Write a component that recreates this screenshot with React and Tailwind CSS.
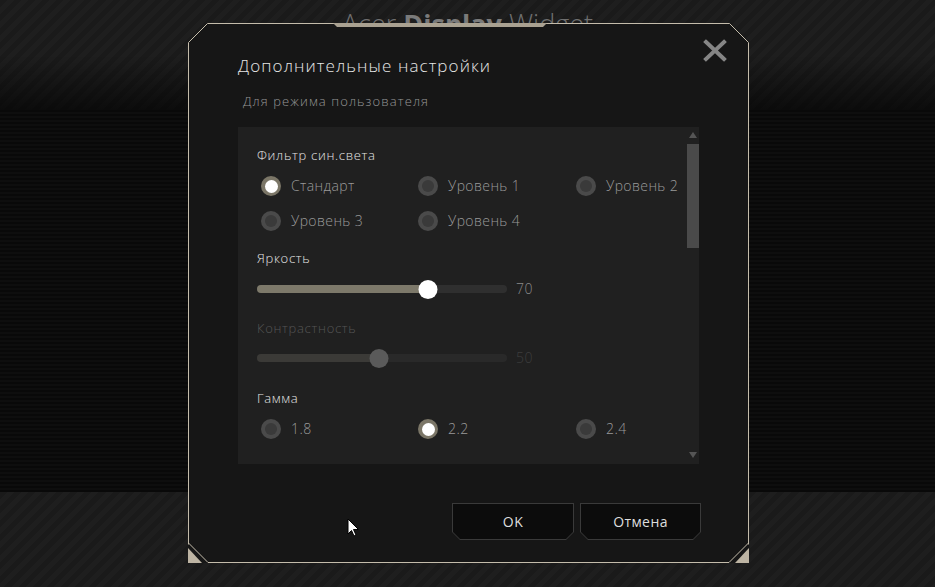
import React from "react";

const font = { fontFamily: '"Open Sans", "Noto Sans", sans-serif' };

const Radio = ({ checked, label }) => (
    <div className="flex items-center h-[20px] whitespace-nowrap">
        {checked ? (
            <div className="w-[20px] h-[20px] shrink-0 rounded-full bg-[#7b7667] flex items-center justify-center">
                <div className="w-[13px] h-[13px] rounded-full bg-white" />
            </div>
        ) : (
            <div className="w-[20px] h-[20px] shrink-0 rounded-full bg-[#4a4a4a] flex items-center justify-center">
                <div className="w-[12px] h-[12px] rounded-full bg-[#3a3a3a]" />
            </div>
        )}
        <span className="ml-[10px] text-[14px] font-light tracking-[0.4px] text-[#9a9a9a] leading-none">{label}</span>
    </div>
);

const Slider = ({ value, disabled }) => {
    const pos = value * 2.45 - 0.5;
    return (
        <div className="flex items-center h-[20px]">
            <div className="relative w-[250px] h-[20px] flex items-center">
                <div className={"w-full h-[8px] rounded-full " + (disabled ? "bg-[#292929]" : "bg-[#2f2f2f]")} />
                <div
                    className={"absolute left-0 h-[8px] rounded-l-full " + (disabled ? "bg-[#3b3a37]" : "bg-[#7d796a]")}
                    style={{ width: pos }}
                />
                <div
                    className={"absolute w-[19px] h-[19px] rounded-full -translate-x-1/2 " + (disabled ? "bg-[#5a5a5a]" : "bg-white")}
                    style={{ left: pos }}
                />
            </div>
            <span className={"ml-[9px] text-[14px] font-light tracking-[0.5px] leading-none " + (disabled ? "text-[#3d3d3d]" : "text-[#8a8a8a]")}>
                {value}
            </span>
        </div>
    );
};

const Button = ({ children, width }) => (
    <div className={"h-[37px] bg-[#3a3a3a] [clip-path:polygon(0_0,100%_0,100%_calc(100%-8px),calc(100%-8px)_100%,8px_100%,0_calc(100%-8px))] " + width}>
        <div className="m-[1px] h-[35px] bg-[#0c0c0c] flex items-center justify-center text-[14px] tracking-[0.4px] text-[#dedede] [clip-path:polygon(0_0,100%_0,100%_calc(100%-7px),calc(100%-7px)_100%,7px_100%,0_calc(100%-7px))]">
            {children}
        </div>
    </div>
);

export default function App() {
    return (
        <div className="relative w-[935px] h-[587px] overflow-hidden flex flex-col bg-[#1b1b1b]" style={font}>
            {/* top band with window title */}
            <div className="h-[110px] relative bg-[repeating-linear-gradient(135deg,#1a1a1a_0px,#1a1a1a_5px,#1e1e1e_5px,#1e1e1e_10px)]">
                <div className="absolute inset-0 bg-gradient-to-b from-transparent from-50% to-black/60" />
                <div className="relative pt-[10px] text-center text-[27px] leading-none text-[#6f6f6f]">
                    <span className="font-light">Acer </span>
                    <span className="font-bold text-[#7a7a7a]">Display</span>
                    <span className="font-light"> Widget</span>
                </div>
            </div>
            {/* dark middle band */}
            <div className="h-[382px] bg-[repeating-linear-gradient(0deg,#090909_0px,#090909_2px,#0e0e0e_2px,#0e0e0e_4px)]" />
            {/* bottom band */}
            <div className="flex-1 bg-[repeating-linear-gradient(135deg,#1a1a1a_0px,#1a1a1a_5px,#1e1e1e_5px,#1e1e1e_10px)]" />

            {/* dialog */}
            <div className="absolute left-[188px] top-[23px] w-[561px] h-[540px] bg-[#161616] [clip-path:polygon(19px_0,calc(100%-19px)_0,100%_19px,100%_100%,0_100%,0_19px)]">
                <svg className="absolute inset-0" width="561" height="540">
                    <polyline
                        points="0.5,540 0.5,19.5 19.5,0.5 541.5,0.5 560.5,19.5 560.5,540"
                        fill="none"
                        stroke="#c4bcab"
                        strokeWidth="1"
                    />
                    <line x1="20" y1="539.5" x2="541" y2="539.5" stroke="#c4bcab" strokeWidth="1" />
                    <polygon points="0,521 0,540 20,540" fill="#161616" />
                    <polygon points="0,525 0,540 14,540" fill="#bdb4a3" />
                    <line x1="0.5" y1="520" x2="20" y2="539.5" stroke="#c4bcab" strokeWidth="1" />
                    <polygon points="561,521 561,540 541,540" fill="#161616" />
                    <polygon points="561,525 561,540 547,540" fill="#bdb4a3" />
                    <line x1="560.5" y1="520" x2="541" y2="539.5" stroke="#c4bcab" strokeWidth="1" />
                    <polygon points="145,0 359,0 355,4 149,4" fill="#a9a191" />
                    <path d="M518 19 L536 36 M536 19 L518 36" stroke="#858585" strokeWidth="4" strokeLinecap="square" />
                </svg>

                <div className="relative flex flex-col pl-[50px] pr-[48px] pt-[31px]">
                    <div className="h-[24px] flex items-center text-[17px] font-light tracking-[1.1px] text-[#e6e6e6]">
                        Дополнительные настройки
                    </div>
                    <div className="mt-[15px] ml-[5px] h-[18px] flex items-center text-[13px] font-light tracking-[1.1px] text-[#979797]">
                        Для режима пользователя
                    </div>

                    {/* scroll panel */}
                    <div className="mt-[16px] w-[461px] h-[337px] bg-[#202020] flex">
                        <div className="flex-1 min-w-0 flex flex-col pl-[19px] pt-[20px]">
                            <div className="h-[18px] flex items-center text-[13px] font-light tracking-[0.7px] text-[#e6e6e6]">Фильтр син.света</div>
                            <div className="mt-[11px] ml-[4px] grid grid-cols-[157px_158px_110px] gap-y-[15px]">
                                <Radio checked label="Стандарт" />
                                <Radio label="Уровень 1" />
                                <Radio label="Уровень 2" />
                                <Radio label="Уровень 3" />
                                <Radio label="Уровень 4" />
                            </div>

                            <div className="mt-[19px] h-[18px] flex items-center text-[13px] font-light tracking-[0.7px] text-[#e6e6e6]">Яркость</div>
                            <div className="mt-[11px]">
                                <Slider value={70} />
                            </div>

                            <div className="mt-[21px] h-[18px] flex items-center text-[13px] font-light tracking-[0.7px] text-[#555555]">Контрастность</div>
                            <div className="mt-[10px]">
                                <Slider value={50} disabled />
                            </div>

                            <div className="mt-[22px] h-[18px] flex items-center text-[13px] font-light tracking-[0.7px] text-[#e6e6e6]">Гамма</div>
                            <div className="mt-[11px] ml-[4px] grid grid-cols-[157px_158px_110px]">
                                <Radio label="1.8" />
                                <Radio checked label="2.2" />
                                <Radio label="2.4" />
                            </div>
                        </div>

                        {/* scrollbar */}
                        <div className="w-[13px] shrink-0 flex flex-col items-center pt-[5px] pb-[6px]">
                            <div className="w-0 h-0 border-l-[4px] border-r-[4px] border-b-[6px] border-l-transparent border-r-transparent border-b-[#555555]" />
                            <div className="mt-[6px] w-[12px] h-[104px] bg-[#4a4a4a]" />
                            <div className="flex-1" />
                            <div className="w-0 h-0 border-l-[4px] border-r-[4px] border-t-[6px] border-l-transparent border-r-transparent border-t-[#555555]" />
                        </div>
                    </div>

                    {/* buttons */}
                    <div className="mt-[39px] flex justify-end gap-[6px]">
                        <Button width="w-[122px]">OK</Button>
                        <Button width="w-[121px]">Отмена</Button>
                    </div>
                </div>
            </div>

            {/* mouse pointer */}
            <svg className="absolute left-[347px] top-[518px]" width="13" height="20" viewBox="0 0 13 20">
                <path d="M1 1 L1 16 L4.5 12.5 L7 18 L9 17 L6.5 11.5 L11.5 11.5 Z" fill="#ffffff" stroke="#000000" strokeWidth="1" />
            </svg>
        </div>
    );
}
